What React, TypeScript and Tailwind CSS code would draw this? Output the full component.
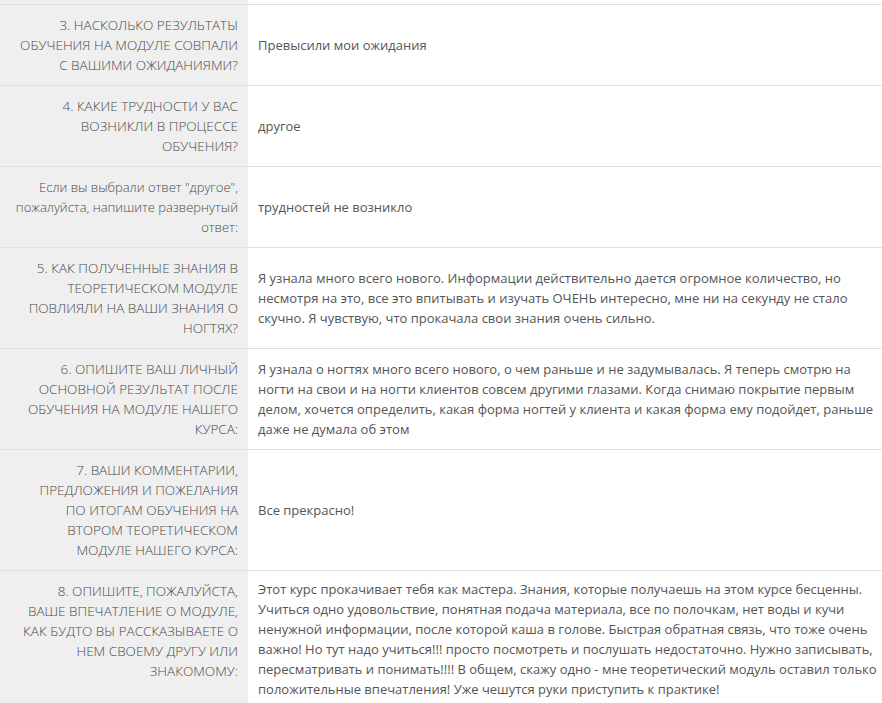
import React from "react";

type Row = {
  question: string[];
  answer: string;
  upper?: boolean;
};

// left-column lines are broken where the original breaks them
const rows: Row[] = [
  {
    question: ["3. Насколько результаты", "обучения на модуле совпали", "с вашими ожиданиями?"],
    answer: "Превысили мои ожидания",
    upper: true,
  },
  {
    question: ["4. Какие трудности у вас", "возникли в процессе", "обучения?"],
    answer: "другое",
    upper: true,
  },
  {
    question: ['Если вы выбрали ответ "другое",', "пожалуйста, напишите развернутый", "ответ:"],
    answer: "трудностей не возникло",
  },
  {
    question: [
      "5. Как полученные знания в",
      "теоретическом модуле",
      "повлияли на ваши знания о",
      "ногтях?",
    ],
    answer:
      "Я узнала много всего нового. Информации действительно дается огромное количество, но несмотря на это, все это впитывать и изучать ОЧЕНЬ интересно, мне ни на секунду не стало скучно. Я чувствую, что прокачала свои знания очень сильно.",
    upper: true,
  },
  {
    question: [
      "6. Опишите ваш личный",
      "основной результат после",
      "обучения на модуле нашего",
      "курса:",
    ],
    answer:
      "Я узнала о ногтях много всего нового, о чем раньше и не задумывалась. Я теперь смотрю на ногти на свои и на ногти клиентов совсем другими глазами. Когда снимаю покрытие первым делом, хочется определить, какая форма ногтей у клиента и какая форма ему подойдет, раньше даже не думала об этом",
    upper: true,
  },
  {
    question: [
      "7. Ваши комментарии,",
      "предложения и пожелания",
      "по итогам обучения на",
      "втором теоретическом",
      "модуле нашего курса:",
    ],
    answer: "Все прекрасно!",
    upper: true,
  },
  {
    question: [
      "8. Опишите, пожалуйста,",
      "ваше впечатление о модуле,",
      "как будто вы рассказываете о",
      "нем своему другу или",
      "знакомому:",
    ],
    answer:
      "Этот курс прокачивает тебя как мастера. Знания, которые получаешь на этом курсе бесценны. Учиться одно удовольствие, понятная подача материала, все по полочкам, нет воды и кучи ненужной информации, после которой каша в голове. Быстрая обратная связь, что тоже очень важно! Но тут надо учиться!!! просто посмотреть и послушать недостаточно. Нужно записывать, пересматривать и понимать!!!! В общем, скажу одно - мне теоретический модуль оставил только положительные впечатления! Уже чешутся руки приступить к практике!",
    upper: true,
  },
];

export default function App() {
  return (
    <div
      className="w-[882px] h-[703px] overflow-hidden bg-white text-[13px] leading-[20px] text-[#555555]"
      style={{ fontFamily: '"Open Sans", "Liberation Sans", sans-serif' }}
    >
      {/* tail of the previous row */}
      <div className="grid grid-cols-[248px_1fr] h-[4px]">
        <div className="bg-[#efefef]" />
        <div />
      </div>

      {rows.map((row, i) => (
        <div
          key={i}
          className="grid grid-cols-[248px_1fr] border-t border-[#e0e0e0]"
        >
          <div
            className={`bg-[#efefef] py-[10px] pl-[8px] pr-[10px] text-right font-[350] text-[#4a4a4a] ${
              row.upper ? "uppercase text-[13.5px]" : "text-[13px]"
            }`}
          >
            {row.question.map((line, j) => (
              <span key={j} className="block whitespace-nowrap">
                {line}
              </span>
            ))}
          </div>
          <div className="flex items-center py-[8px] pl-[10px] pr-[4px]">
            <p>{row.answer}</p>
          </div>
        </div>
      ))}
    </div>
  );
}
